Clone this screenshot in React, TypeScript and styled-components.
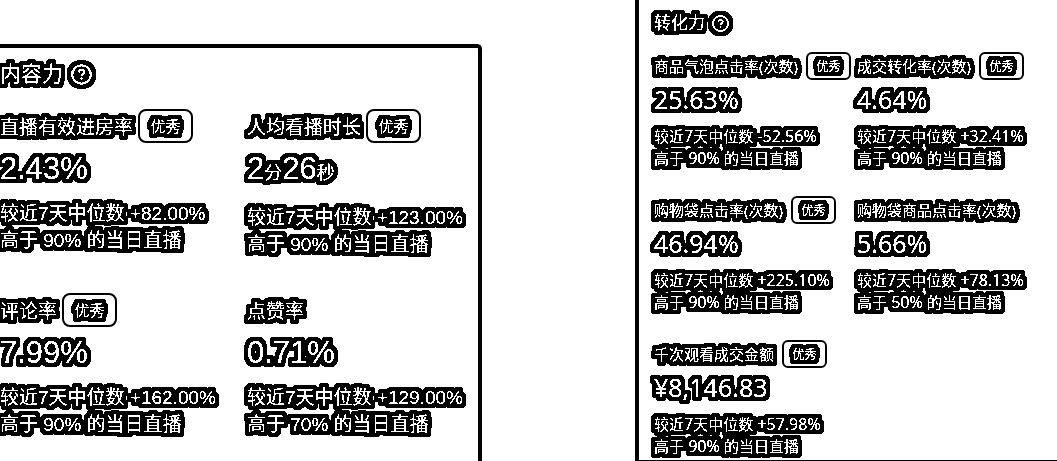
import React from "react";
import styled, { createGlobalStyle, ThemeProvider } from "styled-components";

const GlobalStyle = createGlobalStyle`
  * { box-sizing: border-box; }
  body { margin: 0; background: #fff; overflow-x: hidden; }
  h2, h3, p { margin: 0; font-weight: 400; }
`;

const large = {
  latin: '"Liberation Sans"',
  title: 21, titleLine: 28, titleGap: 21, icon: 21, iconGap: 8,
  label: 19, labelGap: 5, labelLine: 34, labelPad: 4,
  tag: 15, tagWidth: 55, tagPad: 2, radius: 8,
  value: 31, unit: 18, valueLine: 36, valueTop: 8, valueBottom: 13,
  note: 19, noteNumber: 19, noteLine: 27,
  rowGap: 35, column: 247,
};

const compact = {
  latin: '"Noto Sans"',
  title: 17, titleLine: 24, titleGap: 17, icon: 17, iconGap: 7,
  label: 15, labelGap: 8, labelLine: 28, labelPad: 0,
  tag: 12, tagWidth: 45, tagPad: 2, radius: 6,
  value: 25, unit: 15, valueLine: 30, valueTop: 4, valueBottom: 11,
  note: 15, noteNumber: 16, noteLine: 22,
  rowGap: 27, column: 203,
};

type Scale = typeof large;
type Themed = { theme: any };
const px = (key: keyof Scale) => ({ theme }: Themed) => `${theme[key]}px`;

const Page = styled.main`
  display: grid;
  grid-template-columns: 482fr 153fr 422fr;
  min-height: 100vh;
`;

const Panel = styled.section<{ $side: "left" | "right" }>`
  min-width: 0;
  color: #fff;
  font-family: ${({ theme }) => theme.latin}, "Noto Sans CJK SC", sans-serif;
  border: 0 solid #000;
  ${({ $side }) =>
    $side === "left"
      ? "grid-column: 1; margin-top: 44px; padding: 12px 0 0; border-width: 4px 4px 0 0; border-top-right-radius: 5px;"
      : "grid-column: 3; padding: 11px 0 3px 15px; border-width: 0 0 1px 4px;"}
`;

const Outlined = styled.span`
  display: inline-block;
  white-space: nowrap;
  filter: url(#text-outline);
`;

const PanelHead = styled.header`
  display: flex;
  align-items: center;
  gap: ${px("iconGap")};
  margin-bottom: ${px("titleGap")};
`;

const Title = styled.h2`
  font-size: ${px("title")};
  line-height: ${px("titleLine")};
`;

const HelpButton = styled.button`
  display: flex;
  padding: 0;
  border: 0;
  background: none;
  color: #fff;
  filter: url(#text-outline);

  svg {
    width: ${px("icon")};
    height: ${px("icon")};
  }
`;

const Metrics = styled.div`
  display: grid;
  grid-template-columns: ${px("column")} 1fr;
  row-gap: ${px("rowGap")};
`;

const MetricCell = styled.article`
  min-width: 0;
`;

const LabelRow = styled.div`
  display: flex;
  align-items: center;
  gap: ${px("labelGap")};
  height: ${px("labelLine")};
`;

const Label = styled.h3`
  padding-top: ${px("labelPad")};
  font-size: ${px("label")};
  line-height: ${px("labelLine")};
`;

const Tag = styled.span`
  display: flex;
  flex: none;
  align-items: center;
  justify-content: center;
  width: ${px("tagWidth")};
  height: ${px("labelLine")};
  padding-top: ${px("tagPad")};
  border: 2px solid #000;
  border-radius: ${px("radius")};
  font-size: ${px("tag")};
  line-height: 20px;
`;

const Value = styled.p<{ $units: boolean }>`
  height: ${px("valueLine")};
  margin: ${px("valueTop")} 0 ${px("valueBottom")};
  font-size: ${px("value")};
  line-height: ${px("valueLine")};
  ${({ $units }) => $units && "box-sizing: content-box; padding-bottom: 4px;"}
`;

const Unit = styled.span`
  font-size: ${px("unit")};
`;

const Note = styled.p`
  height: ${px("noteLine")};
  font-size: ${px("note")};
  line-height: ${px("noteLine")};
`;

const Figure = styled.span`
  font-size: ${px("noteNumber")};
`;

interface Metric {
  label: string;
  excellent?: boolean;
  value: React.ReactNode;
  units?: boolean;
  change: string;
  rank: string;
}

const content: Metric[] = [
  { label: "直播有效进房率", excellent: true, value: "2.43%", change: "+82.00%", rank: "90%" },
  {
    label: "人均看播时长",
    excellent: true,
    value: <>2<Unit>分</Unit>26<Unit>秒</Unit></>,
    units: true,
    change: "+123.00%",
    rank: "90%",
  },
  { label: "评论率", excellent: true, value: "7.99%", change: "+162.00%", rank: "90%" },
  { label: "点赞率", value: "0.71%", change: "+129.00%", rank: "70%" },
];

const conversion: Metric[] = [
  { label: "商品气泡点击率(次数)", excellent: true, value: "25.63%", change: "-52.56%", rank: "90%" },
  { label: "成交转化率(次数)", excellent: true, value: "4.64%", change: "+32.41%", rank: "90%" },
  { label: "购物袋点击率(次数)", excellent: true, value: "46.94%", change: "+225.10%", rank: "90%" },
  { label: "购物袋商品点击率(次数)", value: "5.66%", change: "+78.13%", rank: "50%" },
  { label: "千次观看成交金额", excellent: true, value: "¥8,146.83", change: "+57.98%", rank: "90%" },
];

/* Thickens the glyphs by an octagonal brush in black and lays crisp white glyphs on top. */
const BRUSH = [
  "0 1 1 1 1 1 1 1 0",
  "1 1 1 1 1 1 1 1 1",
  "1 1 1 1 1 1 1 1 1",
  "1 1 1 1 1 1 1 1 1",
  "1 1 1 1 1 1 1 1 1",
  "1 1 1 1 1 1 1 1 1",
  "1 1 1 1 1 1 1 1 1",
  "1 1 1 1 1 1 1 1 1",
  "0 1 1 1 1 1 1 1 0",
].join(" ");

const OutlineFilter = () => (
  <svg width="0" height="0" style={{ position: "absolute" }} aria-hidden="true">
    <filter id="text-outline" x="-50%" y="-50%" width="200%" height="200%" colorInterpolationFilters="sRGB">
      <feComponentTransfer in="SourceGraphic" result="glyphs">
        <feFuncA type="discrete" tableValues="0 0 1 1 1" />
      </feComponentTransfer>
      <feConvolveMatrix in="glyphs" order="9" kernelMatrix={BRUSH} divisor="1" edgeMode="none" result="thick" />
      <feColorMatrix in="thick" values="0 0 0 0 0  0 0 0 0 0  0 0 0 0 0  0 0 0 1 0" result="halo" />
      <feMerge>
        <feMergeNode in="halo" />
        <feMergeNode in="glyphs" />
      </feMerge>
    </filter>
  </svg>
);

const HelpIcon = () => (
  <svg viewBox="0 0 21 21" fill="none" stroke="currentColor" strokeWidth="2">
    <circle cx="10.5" cy="10.5" r="9.3" />
    <path d="M7.8 8.4c.2-1.8 1.2-2.6 2.8-2.6 1.7 0 2.7 1 2.7 2.4 0 1.7-2.6 2-2.6 4M10.6 13.6v2" />
  </svg>
);

interface PanelProps {
  side: "left" | "right";
  scale: Scale;
  title: string;
  metrics: Metric[];
}

const AbilityPanel = ({ side, scale, title, metrics }: PanelProps) => (
  <ThemeProvider theme={scale}>
    <Panel $side={side}>
      <PanelHead>
        <Title><Outlined>{title}</Outlined></Title>
        <HelpButton type="button" aria-label={`${title}说明`}><HelpIcon /></HelpButton>
      </PanelHead>
      <Metrics>
        {metrics.map((m) => (
          <MetricCell key={m.label}>
            <LabelRow>
              <Label><Outlined>{m.label}</Outlined></Label>
              {m.excellent && <Tag><Outlined>优秀</Outlined></Tag>}
            </LabelRow>
            <Value $units={!!m.units}><Outlined>{m.value}</Outlined></Value>
            <Note><Outlined>较近<Figure>7</Figure>天中位数<Figure> {m.change}</Figure></Outlined></Note>
            <Note><Outlined>高于<Figure> {m.rank} </Figure>的当日直播</Outlined></Note>
          </MetricCell>
        ))}
      </Metrics>
    </Panel>
  </ThemeProvider>
);

export default function App() {
  return (
    <>
      <GlobalStyle />
      <OutlineFilter />
      <Page>
        <AbilityPanel side="left" scale={large} title="内容力" metrics={content} />
        <AbilityPanel side="right" scale={compact} title="转化力" metrics={conversion} />
      </Page>
    </>
  );
}
